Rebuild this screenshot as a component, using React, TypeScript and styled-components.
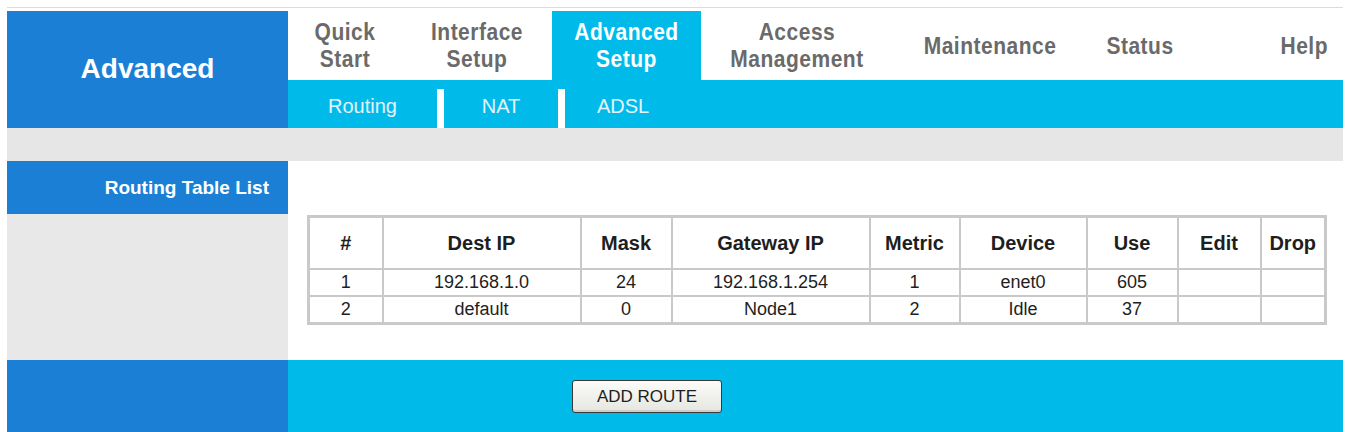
import { createGlobalStyle } from "styled-components";
import styled from "styled-components";

const BLUE = "#1b80d5";
const CYAN = "#00bbea";

const GlobalStyle = createGlobalStyle`
  html, body {
    margin: 0;
    padding: 0;
    background: #ffffff;
    overflow: hidden;
  }
  body {
    font-family: "Liberation Sans", Arial, sans-serif;
  }
`;

const Page = styled.div`
  margin: 7px 3px 0 7px;
  border-top: 1px solid #dcdcdc;
  padding-top: 3px;
  display: grid;
  grid-template-columns: 281px 1fr;
  grid-template-rows: 117px 33px 53px 146px 72px;
`;

const Brand = styled.div`
  background: ${BLUE};
  color: #ffffff;
  font-weight: bold;
  font-size: 28px;
  display: flex;
  align-items: center;
  justify-content: center;
  padding-bottom: 2px;
`;

const Nav = styled.div`
  display: flex;
  flex-direction: column;
`;

const TopNav = styled.div`
  height: 69px;
  display: flex;
  background: #ffffff;
`;

const NavItem = styled.div<{ $w: number; $active?: boolean; $right?: boolean }>`
  width: ${(p) => p.$w}px;
  flex: ${(p) => (p.$right ? "1" : "none")};
  display: flex;
  align-items: center;
  justify-content: ${(p) => (p.$right ? "flex-end" : "center")};
  padding-right: ${(p) => (p.$right ? "15px" : "0")};
  text-align: center;
  font-size: 21px;
  font-weight: bold;
  line-height: 24px;
  letter-spacing: 0.5px;
  color: ${(p) => (p.$active ? "#ffffff" : "#6a6a6a")};
  background: ${(p) => (p.$active ? CYAN : "transparent")};
`;

const NavLabel = styled.span`
  display: inline-block;
  transform: scaleY(1.1);
`;

const SubNav = styled.div`
  height: 48px;
  background: ${CYAN};
  display: flex;
`;

const SubItem = styled.div<{ $w: number }>`
  width: ${(p) => p.$w}px;
  display: flex;
  align-items: center;
  justify-content: center;
  padding-top: 4px;
  font-size: 20px;
  color: #e4f3fa;
`;

const SubSep = styled.div`
  width: 7px;
  height: 39px;
  align-self: flex-end;
  background: #ffffff;
`;

const Band = styled.div`
  grid-column: 1 / -1;
  background: #e6e6e6;
`;

const SectionTitle = styled.div`
  background: ${BLUE};
  color: #ffffff;
  font-weight: bold;
  font-size: 19px;
  display: flex;
  align-items: center;
  justify-content: flex-end;
  padding-right: 19px;
`;

const Main = styled.div`
  grid-row: 3 / 5;
  grid-column: 2;
  padding: 54px 0 0 19px;
`;

const SideFill = styled.div`
  background: #e8e8e8;
`;

const Table = styled.table`
  width: 1017px;
  table-layout: fixed;
  border-collapse: collapse;
  border: 3px solid #c9c9c9;
  font-family: "Liberation Sans", Arial, sans-serif;
  color: #1e1e1e;
`;

const Th = styled.th`
  height: 50px;
  border: 2px solid #c9c9c9;
  font-size: 20px;
  font-weight: bold;
  text-align: center;
  padding: 0;
`;

const Td = styled.td`
  height: 25px;
  border: 2px solid #c9c9c9;
  font-size: 18px;
  text-align: center;
  padding: 0;
`;

const FooterSide = styled.div`
  background: ${BLUE};
`;

const FooterMain = styled.div`
  background: ${CYAN};
  padding: 20px 0 0 284px;
`;

const Button = styled.button`
  width: 150px;
  height: 33px;
  border: 1px solid #3a3a3a;
  border-radius: 3px;
  background: linear-gradient(#fbfbf8, #e6e6e1);
  box-shadow: inset 0 -2px 0 #cfcfca;
  font-family: "Liberation Sans", Arial, sans-serif;
  font-size: 17px;
  color: #1e1e1e;
  padding: 0;
`;

const topNav = [
  { label: ["Quick", "Start"], w: 114 },
  { label: ["Interface", "Setup"], w: 150 },
  { label: ["Advanced", "Setup"], w: 149, active: true },
  { label: ["Access", "Management"], w: 192 },
  { label: ["Maintenance"], w: 194 },
  { label: ["Status"], w: 106 },
];

const columns = [
  { title: "#", w: 74 },
  { title: "Dest IP", w: 198 },
  { title: "Mask", w: 91 },
  { title: "Gateway IP", w: 198 },
  { title: "Metric", w: 90 },
  { title: "Device", w: 127 },
  { title: "Use", w: 91 },
  { title: "Edit", w: 83 },
  { title: "Drop", w: 65 },
];

const routes = [
  ["1", "192.168.1.0", "24", "192.168.1.254", "1", "enet0", "605", "", ""],
  ["2", "default", "0", "Node1", "2", "Idle", "37", "", ""],
];

export default function App() {
  return (
    <>
      <GlobalStyle />
      <Page>
        <Brand>Advanced</Brand>
        <Nav>
          <TopNav>
            {topNav.map((item) => (
              <NavItem key={item.label.join(" ")} $w={item.w} $active={item.active}>
                <NavLabel>
                  {item.label.map((line, i) => (
                    <span key={line}>
                      {i > 0 && <br />}
                      {line}
                    </span>
                  ))}
                </NavLabel>
              </NavItem>
            ))}
            <NavItem $w={0} $right>
              <NavLabel>Help</NavLabel>
            </NavItem>
          </TopNav>
          <SubNav>
            <SubItem $w={149}>Routing</SubItem>
            <SubSep />
            <SubItem $w={114}>NAT</SubItem>
            <SubSep />
            <SubItem $w={116}>ADSL</SubItem>
          </SubNav>
        </Nav>
        <Band />
        <SectionTitle>Routing Table List</SectionTitle>
        <Main>
          <Table>
            <colgroup>
              {columns.map((c) => (
                <col key={c.title} style={{ width: c.w }} />
              ))}
            </colgroup>
            <thead>
              <tr>
                {columns.map((c) => (
                  <Th key={c.title}>{c.title}</Th>
                ))}
              </tr>
            </thead>
            <tbody>
              {routes.map((row) => (
                <tr key={row[0]}>
                  {row.map((cell, i) => (
                    <Td key={i}>{cell}</Td>
                  ))}
                </tr>
              ))}
            </tbody>
          </Table>
        </Main>
        <SideFill />
        <FooterSide />
        <FooterMain>
          <Button>ADD ROUTE</Button>
        </FooterMain>
      </Page>
    </>
  );
}
